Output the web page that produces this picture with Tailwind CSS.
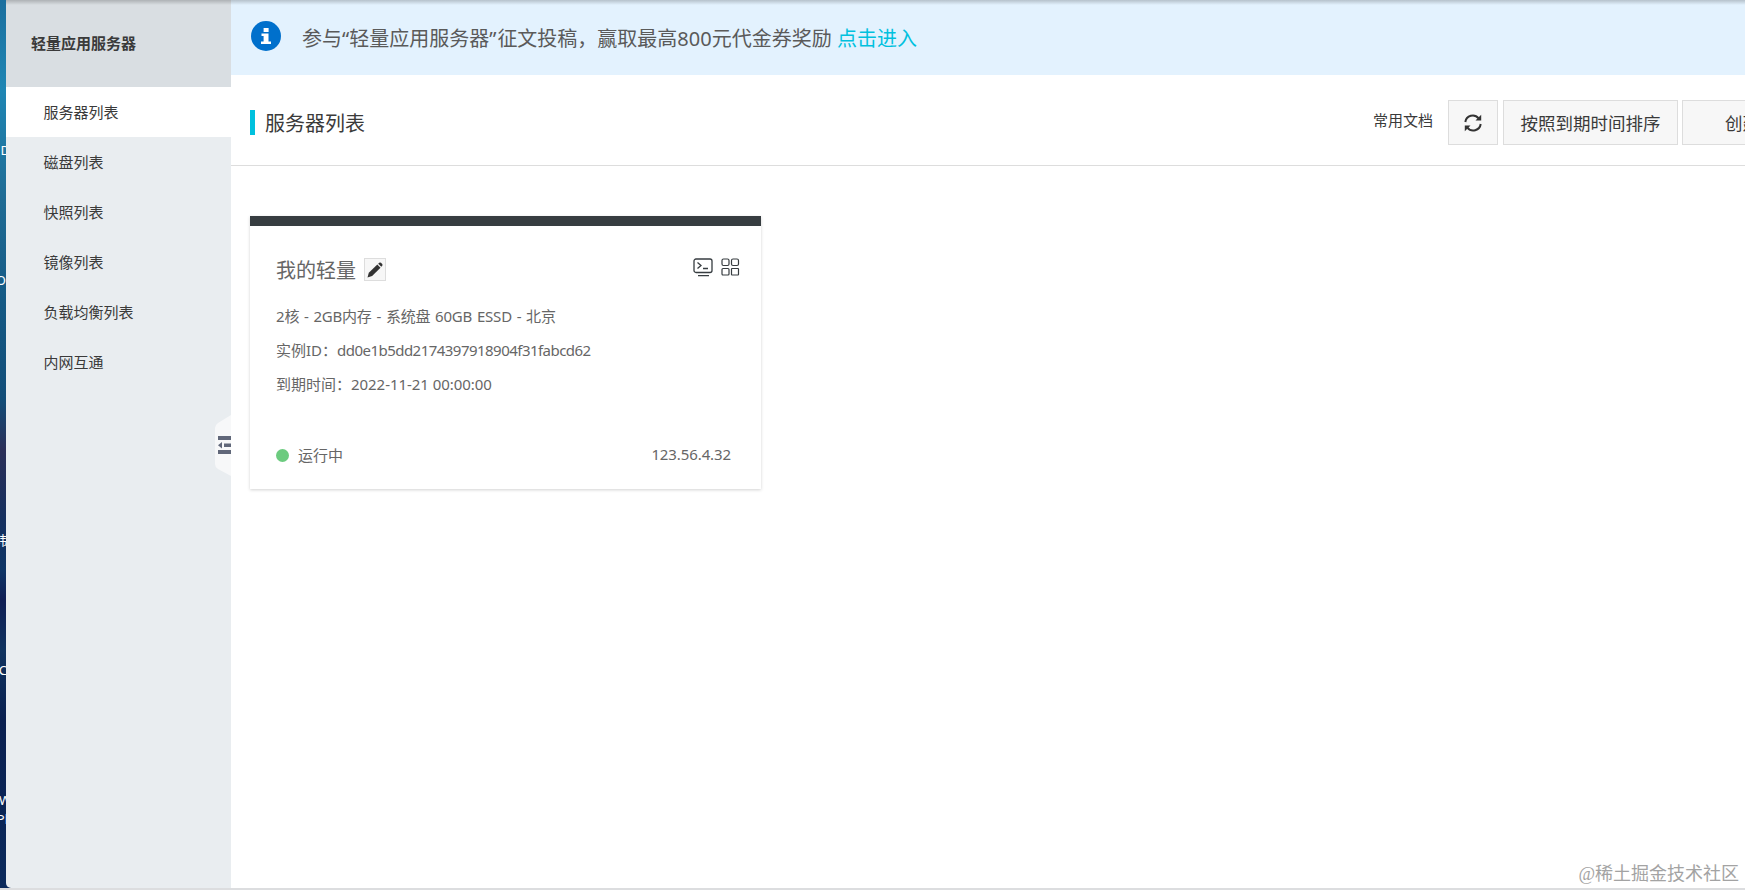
<!DOCTYPE html>
<html lang="zh-CN">
<head>
    <meta charset="UTF-8">
    <meta name="viewport" content="width=device-width, initial-scale=1.0">
    <title>轻量应用服务器</title>
    <script src="https://cdn.jsdelivr.net/npm/@tailwindcss/browser@4"></script>
</head>
<body class="relative h-[890px] overflow-hidden bg-[#dcdddf] font-['Noto_Sans','Noto_Sans_CJK_SC',sans-serif] text-[15px] text-[#3a3a3a]">

    <div class="flex h-[888px]">
        <!-- Desktop behind the window -->
        <div class="relative w-[6px] shrink-0">
            <div class="absolute inset-0 overflow-hidden bg-[linear-gradient(to_bottom,#1b6f9e_0,#1f86b4_90px,#1f6b94_200px,#155a85_300px,#124d78_400px,#2b2f58_450px,#15305f_520px,#0e3566_570px,#101f55_600px,#10335f_650px,#0a2050_720px,#0b2a5c_888px)] text-[13px] leading-4 text-white">
                <span class="absolute right-[-4px] top-[142px]">D</span>
                <span class="absolute right-0 top-[272px]">O</span>
                <span class="absolute right-[-1px] top-[532px]">韩</span>
                <span class="absolute right-[-1px] top-[662px]">C</span>
                <span class="absolute right-[-5px] top-[792px]">W</span>
                <span class="absolute right-[-2px] top-[811px] whitespace-nowrap">Pl</span>
            </div>
            <div class="absolute bottom-0 left-[6px] size-[5px] bg-[#0b2a5c]"></div>
        </div>

        <!-- Sidebar -->
        <aside class="relative w-[225px] shrink-0 rounded-bl-[5px] bg-[#e9edf0]">
            <div class="flex h-[87px] items-center bg-[#d9dee2] pl-[25px] font-bold">轻量应用服务器</div>
            <nav class="[&>a]:flex [&>a]:h-[50px] [&>a]:items-center [&>a]:pl-[37.5px]">
                <a class="bg-white">服务器列表</a>
                <a>磁盘列表</a>
                <a>快照列表</a>
                <a>镜像列表</a>
                <a>负载均衡列表</a>
                <a>内网互通</a>
            </nav>
            <!-- Collapse handle -->
            <svg class="absolute right-0 top-[415px]" width="17" height="62" viewBox="0 0 17 62">
                <path d="M17 0 4 8Q1 10 1 13V49Q1 52 4 54L17 61z" fill="#f7f8f9"/>
                <path d="M4 21h13v4H4zM4 35h13v4H4zM10 28.500h7v3.500h-7zM4 30.200l4-3.200v6.400z" fill="#606779"/>
            </svg>
        </aside>

        <main class="min-w-0 flex-1 bg-white">
            <!-- Notice -->
            <div class="flex h-[75px] items-center bg-[#e3f2fe] pl-5 text-xl text-[#5a5a5a]">
                <svg class="mb-[3px] mr-[21px] shrink-0" width="30" height="30" viewBox="0 0 30 30">
                    <circle cx="15" cy="15" r="15" fill="#0070cc"/>
                    <path d="M12.600 7h5v4h-5zM10.500 12.500h7v8h2.500V23H10v-2.500h2.600V15h-2.100z" fill="#fff"/>
                </svg>
                <p class="mt-0.5 whitespace-nowrap">参与“轻量应用服务器<span class="tracking-[1px]">”</span>征文投稿，赢取最高800元代金券奖励 <a class="text-[#00c1de]">点击进入</a></p>
            </div>

            <!-- Title and actions -->
            <div class="flex h-[91px] items-start border-b border-[#ddd] pl-[19px] pt-[25px]">
                <div class="mt-[10px] h-[25px] w-[5px] bg-[#00c1de]"></div>
                <h1 class="ml-[10px] mt-[9px] text-xl leading-[30px]">服务器列表</h1>
                <div class="ml-auto flex w-[372px] shrink-0 items-start whitespace-nowrap">
                    <a class="mr-[15px] mt-[9px] leading-[22px]">常用文档</a>
                    <button class="flex h-[45px] w-[50px] shrink-0 items-center justify-center border border-[#ddd] bg-[#f7f7f7]">
                        <svg width="18" height="18" viewBox="0 0 18 18" fill="none">
                            <path d="M1.300 8a7.500 7.500 0 0 1 13.300-3.600M16.700 10a7.500 7.500 0 0 1-13.300 3.600" stroke="#333" stroke-width="2"/>
                            <path d="M17.200 .8v5.700h-5.700zM.8 17.200v-5.700h5.700z" fill="#333"/>
                        </svg>
                    </button>
                    <button class="ml-[5px] h-[45px] w-[175px] shrink-0 border border-[#ddd] bg-[#f7f7f7] pt-px text-[17.5px]">按照到期时间排序</button>
                    <button class="ml-1 h-[45px] w-[63px] shrink-0 overflow-hidden border border-r-0 border-[#ddd] bg-[#f7f7f7] pl-[42px] pt-px text-left text-[17.5px]">创建服务器</button>
                </div>
            </div>

            <!-- Server card -->
            <section class="ml-[19px] mt-[50px] h-[273px] w-[511px] border-t-[10px] border-[#373d41] px-[26px] text-[#666] shadow-[0_1px_3px_rgba(0,0,0,0.18)]">
                <div class="flex pt-[32px]">
                    <h2 class="mt-px text-xl leading-[24px]">我的轻量</h2>
                    <div class="ml-2 flex h-[23px] w-[22px] items-center justify-center border border-[#ddd] bg-[#f7f7f7]">
                        <svg width="16" height="16" viewBox="0 0 16 16" fill="#333">
                            <path d="M.5 15.500 1.800 10.800 10.300 2.600 13.500 5.700 5.100 14z"/>
                            <path d="m11.200 1.800 1-1Q13 .1 14 .8l1.200 1.300q.7.900 0 1.700l-.9 1z"/>
                        </svg>
                    </div>
                    <svg class="ml-auto" width="20" height="19" viewBox="0 0 20 19" fill="none" stroke="#373d41" stroke-width="1.300">
                        <rect x="1" y="1" width="18" height="13.500" rx="2"/>
                        <path d="m4.500 4.500 3.500 3-3.500 3M10 10.500h5M5 17.600h11"/>
                    </svg>
                    <svg class="ml-2 mr-[-5px]" width="19" height="18" viewBox="0 0 19 18" fill="none" stroke="#373d41" stroke-width="1.200">
                        <rect x="1" y="1" width="7" height="6.500" rx="1.500"/>
                        <rect x="10.500" y="1" width="7" height="6.500" rx="1.500"/>
                        <rect x="1" y="10.500" width="7" height="6.500" rx="1"/>
                        <rect x="10.500" y="10.500" width="7" height="6.500" rx=".5"/>
                    </svg>
                </div>
                <div class="mt-[16px] whitespace-nowrap leading-[34px]">
                    <p class="tracking-[-0.2px] [word-spacing:1.1px]">2核 - 2GB内存 - 系统盘 60GB ESSD - 北京</p>
                    <p>实例ID：<span class="tracking-[-0.53px]">dd0e1b5dd2174397918904f31fabcd62</span></p>
                    <p>到期时间：<span class="tracking-[-0.05px]">2022-11-21 00:00:00</span></p>
                </div>
                <div class="mt-[43px] flex items-center leading-[22px]">
                    <span class="mr-[9px] size-[13px] rounded-full bg-[#6ccb7f]"></span>
                    <span>运行中</span>
                    <span class="ml-auto mr-[4px] mt-[-2px] tracking-[-0.1px]">123.56.4.32</span>
                </div>
            </section>
        </main>
    </div>

    <!-- Shadow cast by the bar above -->
    <div class="absolute left-[6px] right-0 top-0 h-[5px] bg-linear-to-b from-black/20 to-transparent"></div>

    <div class="absolute bottom-[2px] right-[6px] font-['Liberation_Serif','Noto_Sans_CJK_SC',serif] text-[18px] text-[#a3a3a3]">@稀土掘金技术社区</div>
</body>
</html>
